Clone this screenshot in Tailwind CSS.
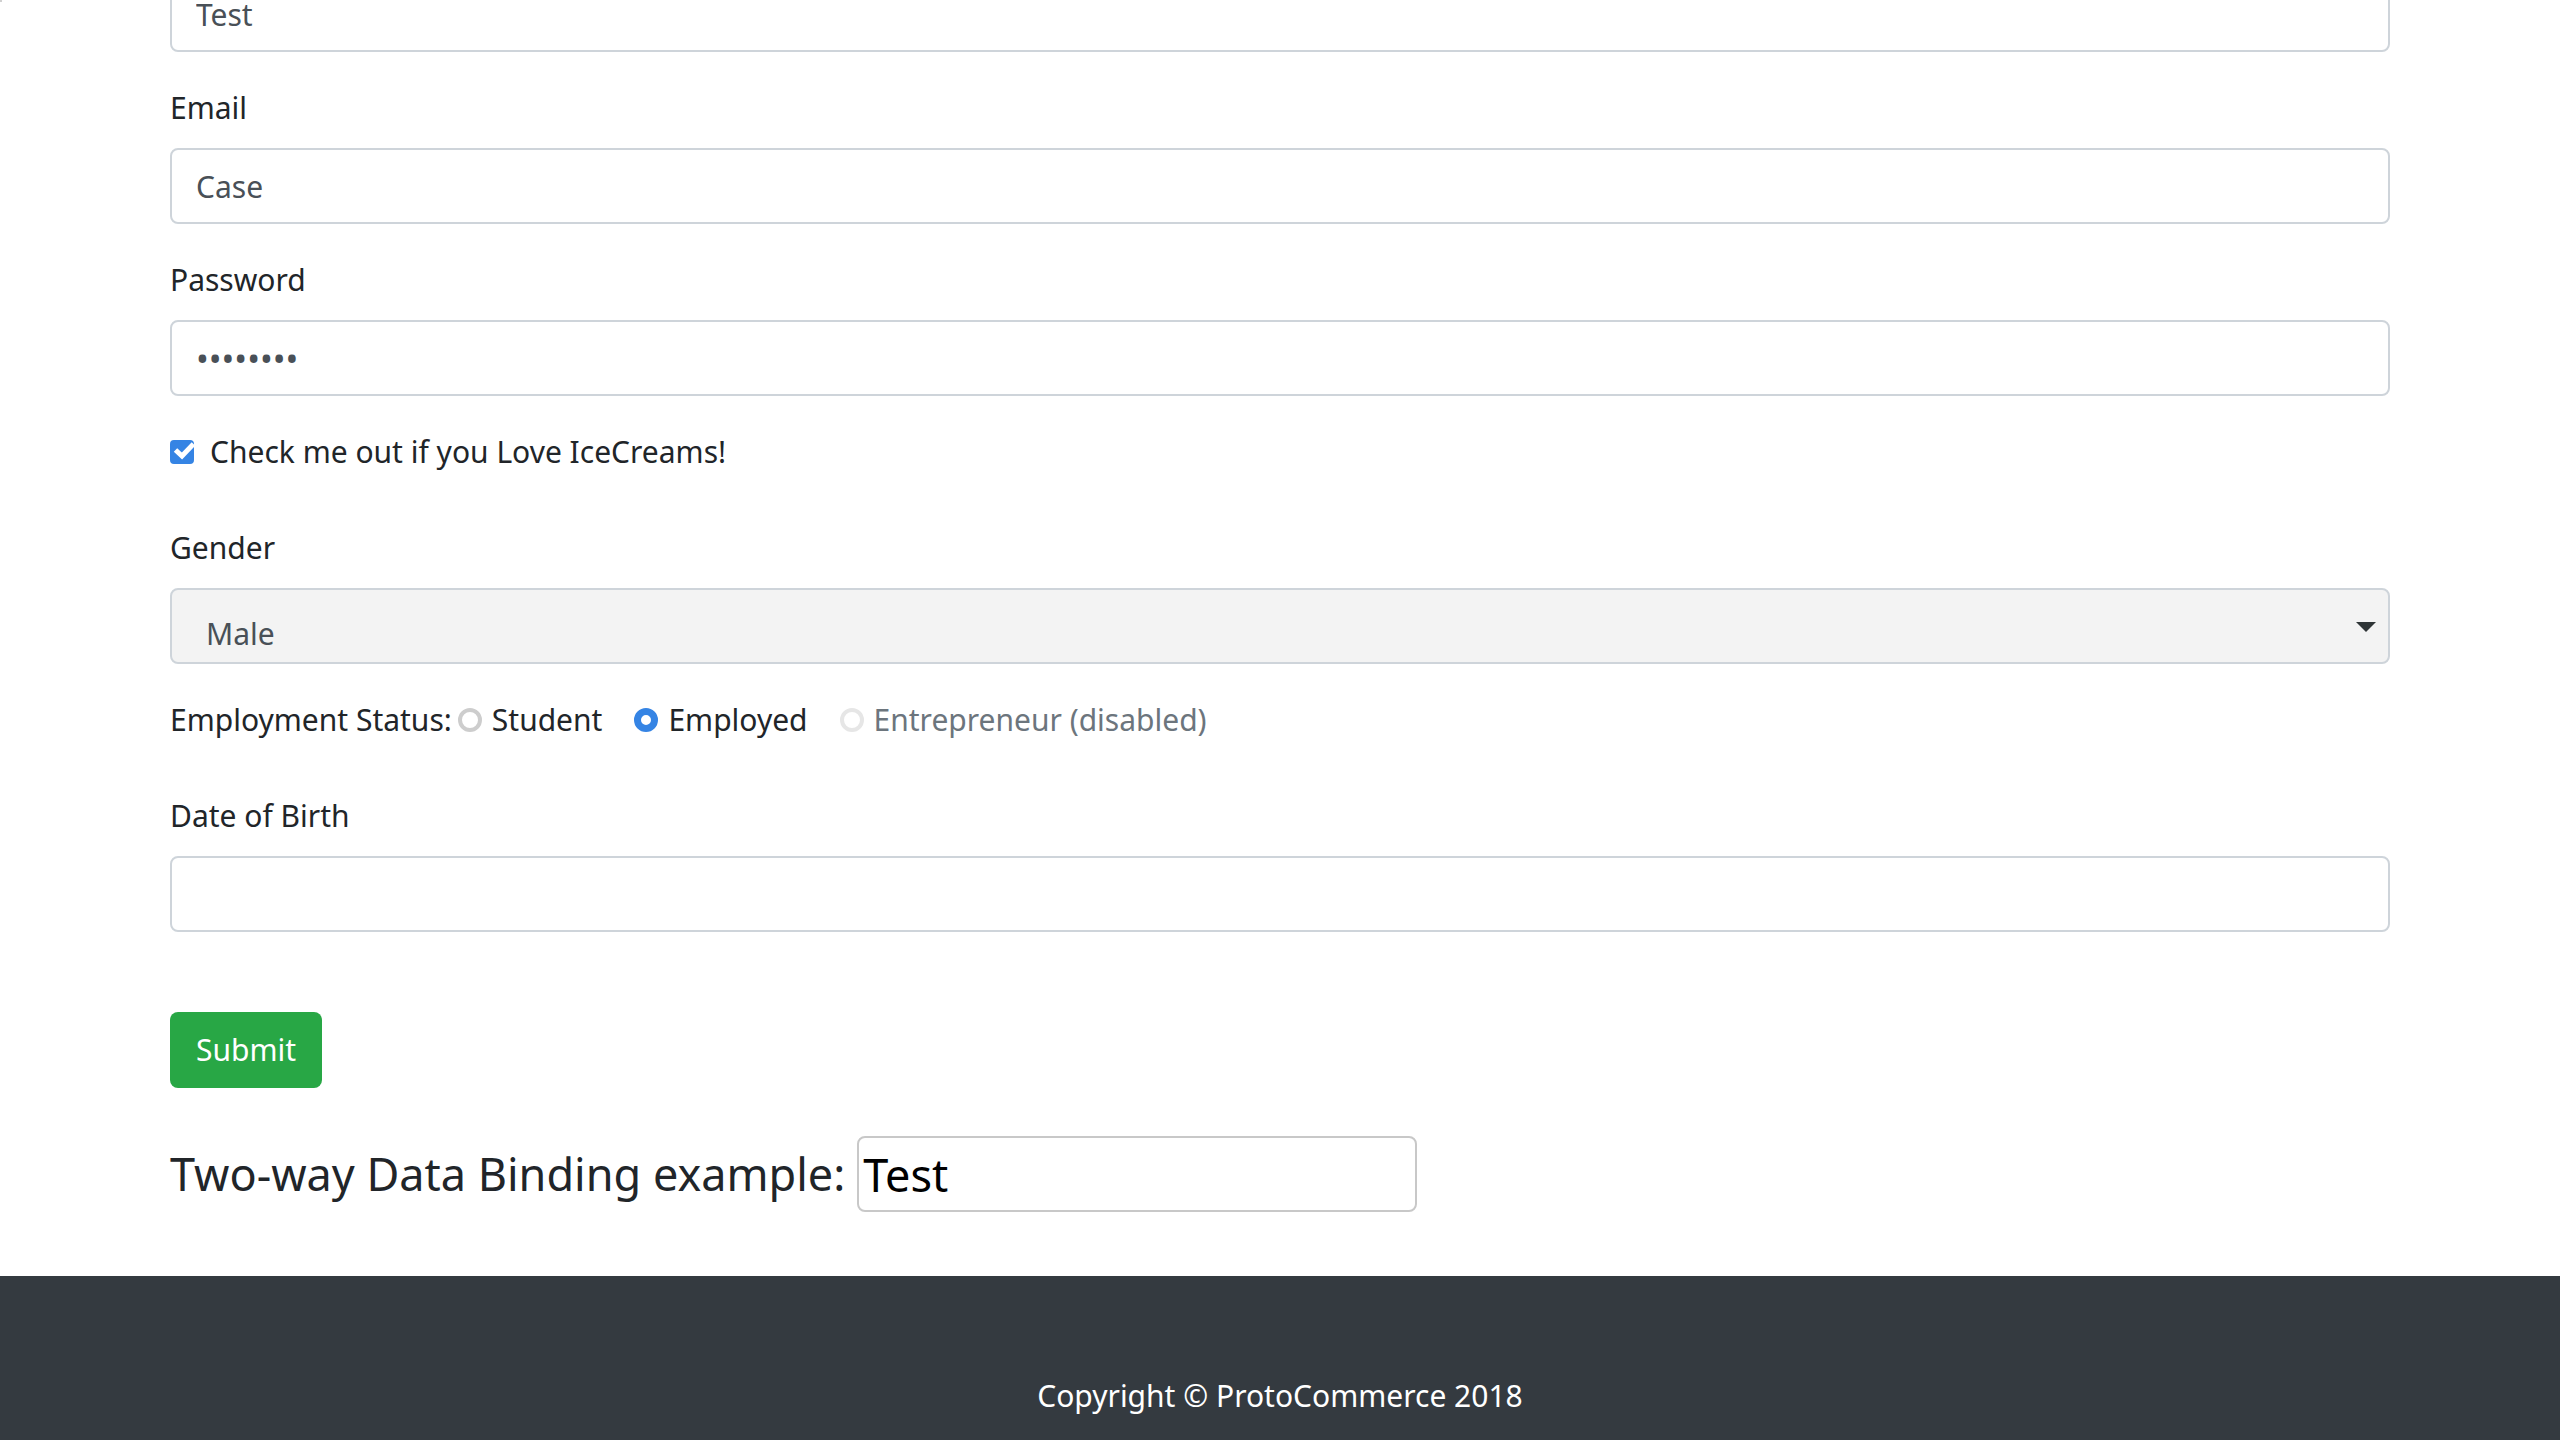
<!DOCTYPE html>
<html lang="en">
<head>
<meta charset="utf-8">
<meta name="viewport" content="width=device-width, initial-scale=1">
<title>ProtoCommerce</title>
<script src="https://cdn.jsdelivr.net/npm/@tailwindcss/browser@4"></script>
</head>
<body class="relative min-h-screen overflow-x-hidden bg-white font-['Noto_Sans',sans-serif] text-[30px] leading-[48px] text-[#212529] flex flex-col">
<span class="absolute left-0 top-0 size-0.5 bg-[#d0d0d0]"></span>
<main class="px-6 md:px-[170px] pb-16">
  <form class="-mt-6 flex flex-col">
    <input type="text" aria-label="Name" value="Test" class="h-[76px] w-full rounded-lg border-2 border-[#ced4da] bg-white px-6 text-[#495057]">

    <div class="mt-8 flex flex-col gap-4">
      <label for="email">Email</label>
      <input id="email" type="text" value="Case" class="h-[76px] w-full rounded-lg border-2 border-[#ced4da] bg-white px-6 text-[#495057]">
    </div>

    <div class="mt-8 flex flex-col gap-4">
      <label for="password">Password</label>
      <input id="password" type="password" value="password" class="h-[76px] w-full rounded-lg border-2 border-[#ced4da] bg-white px-6 text-[34px] text-[#495057]">
    </div>

    <div class="mt-8 flex items-center gap-4">
      <span class="relative flex size-6 shrink-0">
        <input id="icecream" type="checkbox" checked class="peer size-6 appearance-none rounded border-2 border-[#c8c8c8] checked:border-[#3584e4] checked:bg-[#3584e4]">
        <svg class="pointer-events-none absolute inset-0 hidden size-6 peer-checked:block" viewBox="0 0 24 24" fill="none" stroke="#fff" stroke-width="5"><path d="M5.500 10L12 16L23.500 4"/></svg>
      </span>
      <label for="icecream">Check me out if you Love IceCreams!</label>
    </div>

    <div class="mt-12 flex flex-col gap-4">
      <label for="gender">Gender</label>
      <div class="relative">
        <select id="gender" class="block h-[76px] w-full appearance-none rounded-lg border-2 border-[#ced4da] bg-[#f3f3f3] pt-4 pr-14 pl-[34px] text-[#495057]">
          <option>Male</option>
          <option>Female</option>
        </select>
        <svg class="pointer-events-none absolute right-3.5 top-[34px] h-2.5 w-5" viewBox="0 0 20 10" fill="#2e3436"><path d="M0 0H20L10 10Z"/></svg>
      </div>
    </div>

    <fieldset class="mt-8 flex flex-wrap items-center gap-x-8">
      <div class="flex items-center gap-2.5">
        <span class="-mr-1">Employment Status:</span>
        <input id="student" type="radio" name="status" class="size-6 appearance-none rounded-full border-4 border-[#cdcdcd] bg-white checked:border-[7px] checked:border-[#3584e4]">
        <label for="student">Student</label>
      </div>
      <div class="flex items-center gap-2.5">
        <input id="employed" type="radio" name="status" checked class="size-6 appearance-none rounded-full border-4 border-[#cdcdcd] bg-white checked:border-[7px] checked:border-[#3584e4]">
        <label for="employed">Employed</label>
      </div>
      <div class="flex items-center gap-2.5">
        <input id="entrepreneur" type="radio" name="status" disabled class="size-6 appearance-none rounded-full border-4 border-[#e6e6e6] bg-white">
        <label for="entrepreneur" class="text-[#6c757d]">Entrepreneur (disabled)</label>
      </div>
    </fieldset>

    <div class="mt-12 flex flex-col gap-4">
      <label for="birthday">Date of Birth</label>
      <input id="birthday" type="text" class="h-[76px] w-full rounded-lg border-2 border-[#ced4da] bg-white px-6 text-[#495057]">
    </div>

    <button type="submit" class="mt-20 h-[76px] self-start rounded-lg bg-[#28a745] px-[26px] text-white">Submit</button>
  </form>

  <div class="mt-12 flex flex-wrap items-center gap-3 text-[45px]">
    <label for="binding">Two-way Data Binding example:</label>
    <input id="binding" type="text" value="Test" class="h-[76px] w-[560px] max-w-full rounded-lg border-2 border-[#c8c8c8] bg-white px-1 text-black">
  </div>
</main>
<footer class="grow bg-[#343a40] px-6 pt-24 pb-5 text-center text-white">
  <p>Copyright © ProtoCommerce 2018</p>
</footer>
</body>
</html>
